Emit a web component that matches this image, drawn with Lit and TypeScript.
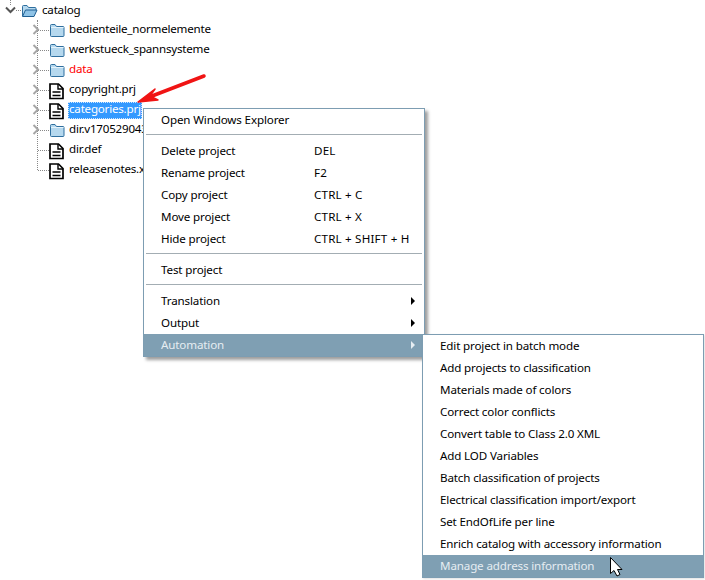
import { LitElement, html, css, svg } from "lit";
import { customElement } from "lit/decorators.js";

type Row = { label: string; icon: "folder" | "file"; expander: boolean; red?: boolean; selected?: boolean };
const rows: Row[] = [
  { label: "bedienteile_normelemente", icon: "folder", expander: true },
  { label: "werkstueck_spannsysteme", icon: "folder", expander: true },
  { label: "data", icon: "folder", expander: true, red: true },
  { label: "copyright.prj", icon: "file", expander: true },
  { label: "categories.prj", icon: "file", expander: true, selected: true },
  { label: "dir.v170529043", icon: "folder", expander: true },
  { label: "dir.def", icon: "file", expander: false },
  { label: "releasenotes.x", icon: "file", expander: false },
];

type Item = { label?: string; key?: string; sub?: boolean; active?: boolean; sep?: boolean };
const menu: Item[] = [
  { label: "Open Windows Explorer" },
  { sep: true },
  { label: "Delete project", key: "DEL" },
  { label: "Rename project", key: "F2" },
  { label: "Copy project", key: "CTRL + C" },
  { label: "Move project", key: "CTRL + X" },
  { label: "Hide project", key: "CTRL + SHIFT + H" },
  { sep: true },
  { label: "Test project" },
  { sep: true },
  { label: "Translation", sub: true },
  { label: "Output", sub: true },
  { label: "Automation", sub: true, active: true },
];
const submenu: Item[] = [
  { label: "Edit project in batch mode" },
  { label: "Add projects to classification" },
  { label: "Materials made of colors" },
  { label: "Correct color conflicts" },
  { label: "Convert table to Class 2.0 XML" },
  { label: "Add LOD Variables" },
  { label: "Batch classification of projects" },
  { label: "Electrical classification import/export" },
  { label: "Set EndOfLife per line" },
  { label: "Enrich catalog with accessory information" },
  { label: "Manage address information", active: true },
];

const closedFolder = svg`<svg class="ico" width="16" height="14" viewBox="0 0 16 14">
  <path d="M1.500 3.500V2.500a1 1 0 0 1 1-1h3.500l1.500 2h6.500a1 1 0 0 1 1 1v8a1 1 0 0 1-1 1h-11.500a1 1 0 0 1-1-1z" fill="#b5d8ee" stroke="#2f6f9f"/>
  <path d="M2 4.500h12.500" stroke="#e6f3fb"/></svg>`;
const fileIcon = svg`<svg class="ico shifted" width="15" height="17" viewBox="0 0 15 17">
  <path d="M1 1h8.500L14 5.500V15.500H1z" fill="#fff" stroke="#000" stroke-width="1.700"/>
  <path d="M9 1v5h5" fill="none" stroke="#000" stroke-width="1.400"/>
  <path d="M3.500 9h8M3.500 12.500h8" stroke="#000" stroke-width="1.500"/></svg>`;
const openFolder = svg`<svg class="ico shifted" width="17" height="14" viewBox="0 0 17 14">
  <path d="M1.500 12V2.500a1 1 0 0 1 1-1h3.500l1.500 2h6.500a1 1 0 0 1 1 1V6" fill="#b5d8ee" stroke="#2f6f9f"/>
  <path d="M1.500 12.500l3-6.500h11.500l-3 6.500z" fill="#8fc3e6" stroke="#1f5f92"/></svg>`;
const chevron = svg`<svg class="exp" width="8" height="11" viewBox="0 0 8 11"><path d="M1.500 1l4.500 4.500L1.500 10" fill="none" stroke="#a6a6a6" stroke-width="2"/></svg>`;
const chevronDown = svg`<svg class="exp" width="11" height="8" viewBox="0 0 11 8"><path d="M1 1.500l4.500 4.500L10 1.500" fill="none" stroke="#555" stroke-width="2"/></svg>`;

@customElement("app-root")
export class AppRoot extends LitElement {
  static styles = css`
    :host { display: block; position: relative; width: 705px; height: 580px; background: #fff; overflow: hidden;
      font-family: "Noto Sans", "Liberation Sans", sans-serif; font-size: 11.6px; color: #000; }
    .tree { display: flex; flex-direction: column; }
    .root { display: flex; align-items: center; height: 20px; padding-left: 5px; }
    .root .stub { width: 5px; border-top: 1px dotted #888; }
    .root .exp { flex: none; }
    .root .label { margin: 3px 0 0 3px; }
    .rows { display: flex; flex-direction: column; margin-left: 37px; border-left: 1px dotted #888; width: max-content; height: 150px; }
    .row { display: flex; flex: none; align-items: center; height: 20px; position: relative; }
    .row .hline { width: 11px; border-top: 1px dotted #888; flex: none; }
    .row .exp { position: absolute; left: -6px; top: 4px; }
    .row .ico { flex: none; }
    .ico.shifted { margin-top: 2px; }
    .row .icon-box { width: 19px; display: flex; align-items: center; flex: none; }
    .label { line-height: 14px; padding: 0 1px 3px; white-space: nowrap; letter-spacing: -0.22px; }
    .label.red { color: #ff0000; }
    .label.selected { background: #3399ff; color: #fff; outline: 1px dotted #cfe6ff; outline-offset: -1px; }
    .menu { position: absolute; background: #fff; border: 1px solid #7d9db2; box-shadow: 3px 3px 3px rgba(0,0,0,.38); box-sizing: border-box; }
    .main { left: 143px; top: 108px; width: 282px; padding-right: 2px; }
    .sub { left: 422px; top: 334px; width: 282px; height: 244px; box-shadow: 1px 1px 2px rgba(0,0,0,.12); }
    .item { display: flex; align-items: center; box-sizing: border-box; height: 22px; padding: 0 0 2px 17px; position: relative; white-space: nowrap; letter-spacing: -0.14px; }
    .item.active { background: #7f9fb3; color: #e6edf2; }
    .item .k { position: absolute; left: 170px; letter-spacing: 0.2px; }
    .item .arr { position: absolute; left: 267px; top: 7px; width: 0; height: 0; border-left: 4px solid #000; border-top: 4px solid transparent; border-bottom: 4px solid transparent; }
    .item.active .arr { border-left-color: #e6edf2; }
    .sep { height: 1px; background: #a3adb3; margin: 3px 0 5px 2px; }
    .overlay { position: absolute; left: 0; top: 0; pointer-events: none; }
  `;

  private renderItem(i: Item) {
    if (i.sep) return html`<div class="sep"></div>`;
    return html`<div class="item ${i.active ? "active" : ""}">
      <span>${i.label}</span>
      ${i.key ? html`<span class="k">${i.key}</span>` : ""}
      ${i.sub ? html`<span class="arr"></span>` : ""}
    </div>`;
  }

  render() {
    return html`
      <div class="tree">
        <div class="root">${chevronDown}<span class="stub"></span>${openFolder}<span class="label">catalog</span></div>
        <div class="rows">
          ${rows.map(r => html`<div class="row">
            ${r.expander ? chevron : ""}
            <span class="hline"></span>
            <span class="icon-box">${r.icon === "folder" ? closedFolder : fileIcon}</span>
            <span class="label ${r.red ? "red" : ""} ${r.selected ? "selected" : ""}">${r.label}</span>
          </div>`)}
        </div>
      </div>
      <div class="menu main">${menu.map(i => this.renderItem(i))}</div>
      <div class="menu sub">${submenu.map(i => this.renderItem(i))}</div>
      <svg class="overlay" width="705" height="580" viewBox="0 0 705 580">
        <path d="M10.500 0V5" stroke="#888" stroke-dasharray="1 1" fill="none"/>
        <path d="M204 76L152 96" stroke="#f01414" stroke-width="3.500" stroke-linecap="round" fill="none"/>
        <path d="M138 102L155 89L150 96L158 100z" fill="#f01414" stroke="#f01414" stroke-width="1.500" stroke-linejoin="round"/>
        <path d="M610.500 557.500V573.500L614 570.500L617 576L620 574.500L617.500 569.500H622z" fill="#fff" stroke="#000" stroke-width="1"/>
      </svg>
    `;
  }
}
